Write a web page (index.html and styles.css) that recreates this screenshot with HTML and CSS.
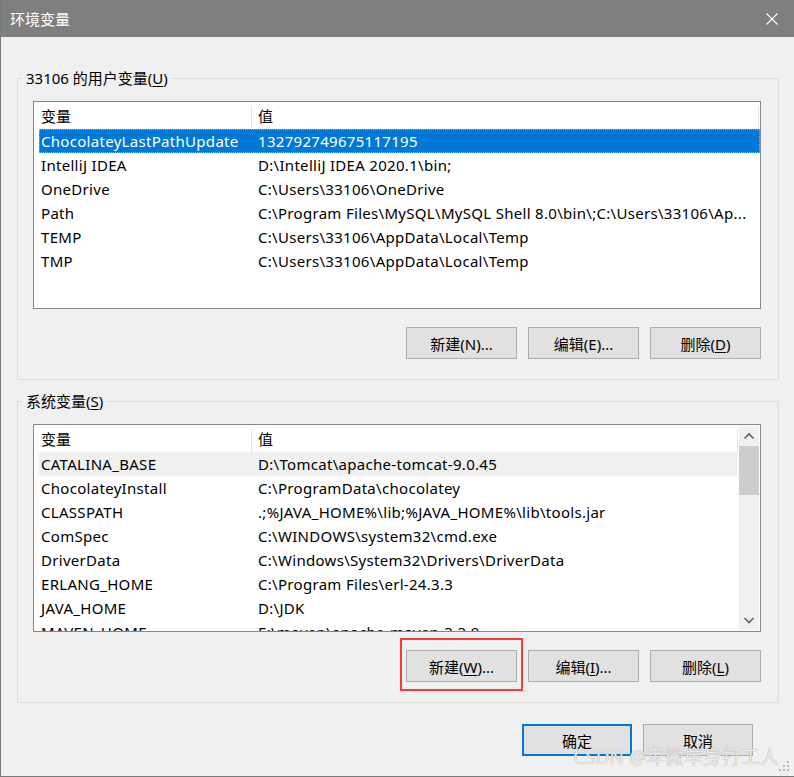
FILE: index.html
```html
<!DOCTYPE html>
<html lang="zh-CN">
<head>
  <meta charset="UTF-8" />
  <title>环境变量</title>
  <link rel="stylesheet" href="styles.css">
</head>
<body>
  <div class="ventana">
    <div class="titulo">
      <span class="titulo-texto">环境变量</span>
      <svg class="cerrar" width="12" height="12" viewBox="0 0 12 12">
        <path d="M0.5 0.5 L11.5 11.5 M11.5 0.5 L0.5 11.5" stroke="#fff" stroke-width="1.1" fill="none" />
      </svg>
    </div>

    <div class="cuerpo">
      <div class="grupo">
        <div class="grupo-titulo">33106 的用户变量(<u>U</u>)</div>
        <div class="lista">
          <div class="lista-area">
            <div class="cabecera">
              <div class="cab-nombre">变量</div>
              <div class="cab-valor">值</div>
            </div>
            <div class="filas">
              <div class="fila seleccionada"><span class="nombre">ChocolateyLastPathUpdate</span><span class="valor">132792749675117195</span></div>
              <div class="fila"><span class="nombre">IntelliJ IDEA</span><span class="valor">D:\IntelliJ IDEA 2020.1\bin;</span></div>
              <div class="fila"><span class="nombre">OneDrive</span><span class="valor">C:\Users\33106\OneDrive</span></div>
              <div class="fila"><span class="nombre">Path</span><span class="valor">C:\Program Files\MySQL\MySQL Shell 8.0\bin\;C:\Users\33106\Ap...</span></div>
              <div class="fila"><span class="nombre">TEMP</span><span class="valor">C:\Users\33106\AppData\Local\Temp</span></div>
              <div class="fila"><span class="nombre">TMP</span><span class="valor">C:\Users\33106\AppData\Local\Temp</span></div>
            </div>
          </div>
        </div>
        <div class="botones">
          <button>新建(N)...</button>
          <button>编辑(E)...</button>
          <button>删除(<u>D</u>)</button>
        </div>
      </div>

      <div class="grupo grupo-sistema">
        <div class="grupo-titulo">系统变量(<u>S</u>)</div>
        <div class="lista">
          <div class="lista-area">
            <div class="cabecera">
              <div class="cab-nombre">变量</div>
              <div class="cab-valor">值</div>
            </div>
            <div class="filas">
              <div class="fila resaltada"><span class="nombre">CATALINA_BASE</span><span class="valor">D:\Tomcat\apache-tomcat-9.0.45</span></div>
              <div class="fila"><span class="nombre">ChocolateyInstall</span><span class="valor">C:\ProgramData\chocolatey</span></div>
              <div class="fila"><span class="nombre">CLASSPATH</span><span class="valor">.;%JAVA_HOME%\lib;%JAVA_HOME%\lib\tools.jar</span></div>
              <div class="fila"><span class="nombre">ComSpec</span><span class="valor">C:\WINDOWS\system32\cmd.exe</span></div>
              <div class="fila"><span class="nombre">DriverData</span><span class="valor">C:\Windows\System32\Drivers\DriverData</span></div>
              <div class="fila"><span class="nombre">ERLANG_HOME</span><span class="valor">C:\Program Files\erl-24.3.3</span></div>
              <div class="fila"><span class="nombre">JAVA_HOME</span><span class="valor">D:\JDK</span></div>
              <div class="fila"><span class="nombre">MAVEN_HOME</span><span class="valor">E:\maven\apache-maven-3.3.9</span></div>
            </div>
          </div>
          <div class="scroll">
            <svg class="flecha" width="20" height="20" viewBox="0 0 20 20">
              <path d="M5.5 12.5 L10 8 L14.5 12.5" stroke="#606060" stroke-width="1.6" fill="none" />
            </svg>
            <div class="pulgar"></div>
            <div class="hueco"></div>
            <svg class="flecha" width="20" height="20" viewBox="0 0 20 20">
              <path d="M5.5 8 L10 12.5 L14.5 8" stroke="#606060" stroke-width="1.6" fill="none" />
            </svg>
          </div>
        </div>
        <div class="botones">
          <button class="marcado">新建(<u>W</u>)...<span class="marca"></span></button>
          <button>编辑(<u>I</u>)...</button>
          <button>删除(<u>L</u>)</button>
        </div>
      </div>

      <div class="botones-dialogo">
        <button class="aceptar">确定</button>
        <button>取消</button>
      </div>
    </div>

    <div class="marca-agua">CSDN @卑微单身打工人</div>
    <svg class="agarre" width="12" height="12" viewBox="0 0 12 12" fill="#b8b8b8">
      <rect x="8" y="0" width="2" height="2" />
      <rect x="4" y="4" width="2" height="2" />
      <rect x="8" y="4" width="2" height="2" />
      <rect x="0" y="8" width="2" height="2" />
      <rect x="4" y="8" width="2" height="2" />
      <rect x="8" y="8" width="2" height="2" />
    </svg>
  </div>
</body>
</html>
```

FILE: styles.css
```css
body {
  margin: 0;
  font-family: "Noto Sans", "Noto Sans CJK SC", sans-serif;
  font-size: 15px;
  color: #000;
  background: #f0f0f0;
}
.ventana {
  position: relative;
  width: 794px;
  height: 777px;
  box-sizing: border-box;
  background: #f0f0f0;
  border-left: 1px solid #7a7a7a;
  border-bottom: 1px solid #7a7a7a;
  overflow: hidden;
}
.titulo {
  height: 37px;
  margin-left: -1px;
  background: #7f7f7f;
  display: flex;
  align-items: center;
  justify-content: space-between;
  padding: 0 16px 0 10px;
}
.titulo-texto {
  color: #fff;
  line-height: 20px;
}
.cuerpo {
  padding: 41px 15px 0 16px;
}
.grupo {
  border: 1px solid #dcdcdc;
  padding: 0 17px 20px 15px;
}
.grupo-sistema {
  margin-top: 21px;
}
.grupo-titulo {
  width: fit-content;
  margin: -11px 0 0 -11px;
  padding: 0 3px 0 4px;
  line-height: 20px;
  background: #f0f0f0;
}
u {
  text-underline-offset: 2px;
}
.lista {
  margin-top: 13px;
  height: 208px;
  box-sizing: border-box;
  border: 1px solid #828790;
  background: #fff;
  display: flex;
  overflow: hidden;
}
.lista-area {
  flex: 1;
  padding-left: 5px;
  overflow: hidden;
}
.cabecera {
  display: flex;
  height: 27px;
  box-sizing: border-box;
  padding-top: 4px;
  line-height: 20px;
}
.cab-nombre {
  width: 210px;
  padding-left: 2px;
  border-right: 1px solid #e5e5e5;
}
.cab-valor {
  flex: 1;
  padding-left: 6px;
  border-right: 1px solid #e5e5e5;
  margin-right: 1px;
}
.fila {
  display: flex;
  height: 24px;
  line-height: 24px;
  white-space: nowrap;
  letter-spacing: 0.3px;
  box-sizing: border-box;
}
.nombre {
  width: 217px;
  padding-left: 2px;
  flex-shrink: 0;
}
.valor {
  flex: 1;
}
.seleccionada {
  background: #0078d7;
  color: #fff;
  outline: 1px dotted #f2a23a;
  outline-offset: -1px;
}
.resaltada {
  background: #f0f0f0;
  margin-right: 2px;
}
.scroll {
  width: 20px;
  margin: 1px 1px 1px 0;
  background: #f0f0f0;
  display: flex;
  flex-direction: column;
}
.flecha {
  display: block;
}
.pulgar {
  height: 49px;
  background: #cdcdcd;
}
.hueco {
  flex: 1;
}
.botones {
  display: flex;
  justify-content: flex-end;
  gap: 11px;
  margin-top: 18px;
}
button {
  position: relative;
  width: 111px;
  height: 32px;
  padding: 0;
  font-family: inherit;
  font-size: 15px;
  color: #000;
  background: #e1e1e1;
  border: 1px solid #adadad;
}
.marca {
  position: absolute;
  left: -7px;
  top: -13px;
  right: -7px;
  bottom: -10px;
  border: 2px solid #f53b3b;
}
.botones-dialogo {
  display: flex;
  justify-content: flex-end;
  gap: 11px;
  margin-top: 21px;
  padding-right: 26px;
}
.botones-dialogo button {
  width: 110px;
}
.aceptar {
  border: 2px solid #0078d7;
}
.marca-agua {
  position: absolute;
  right: 15px;
  bottom: 8px;
  font-size: 19px;
  line-height: 22px;
  color: rgba(250, 250, 250, 0.85);
  text-shadow: 0 0 1px #8a8a8a;
}
.agarre {
  position: absolute;
  right: 3px;
  bottom: 3px;
}
```
